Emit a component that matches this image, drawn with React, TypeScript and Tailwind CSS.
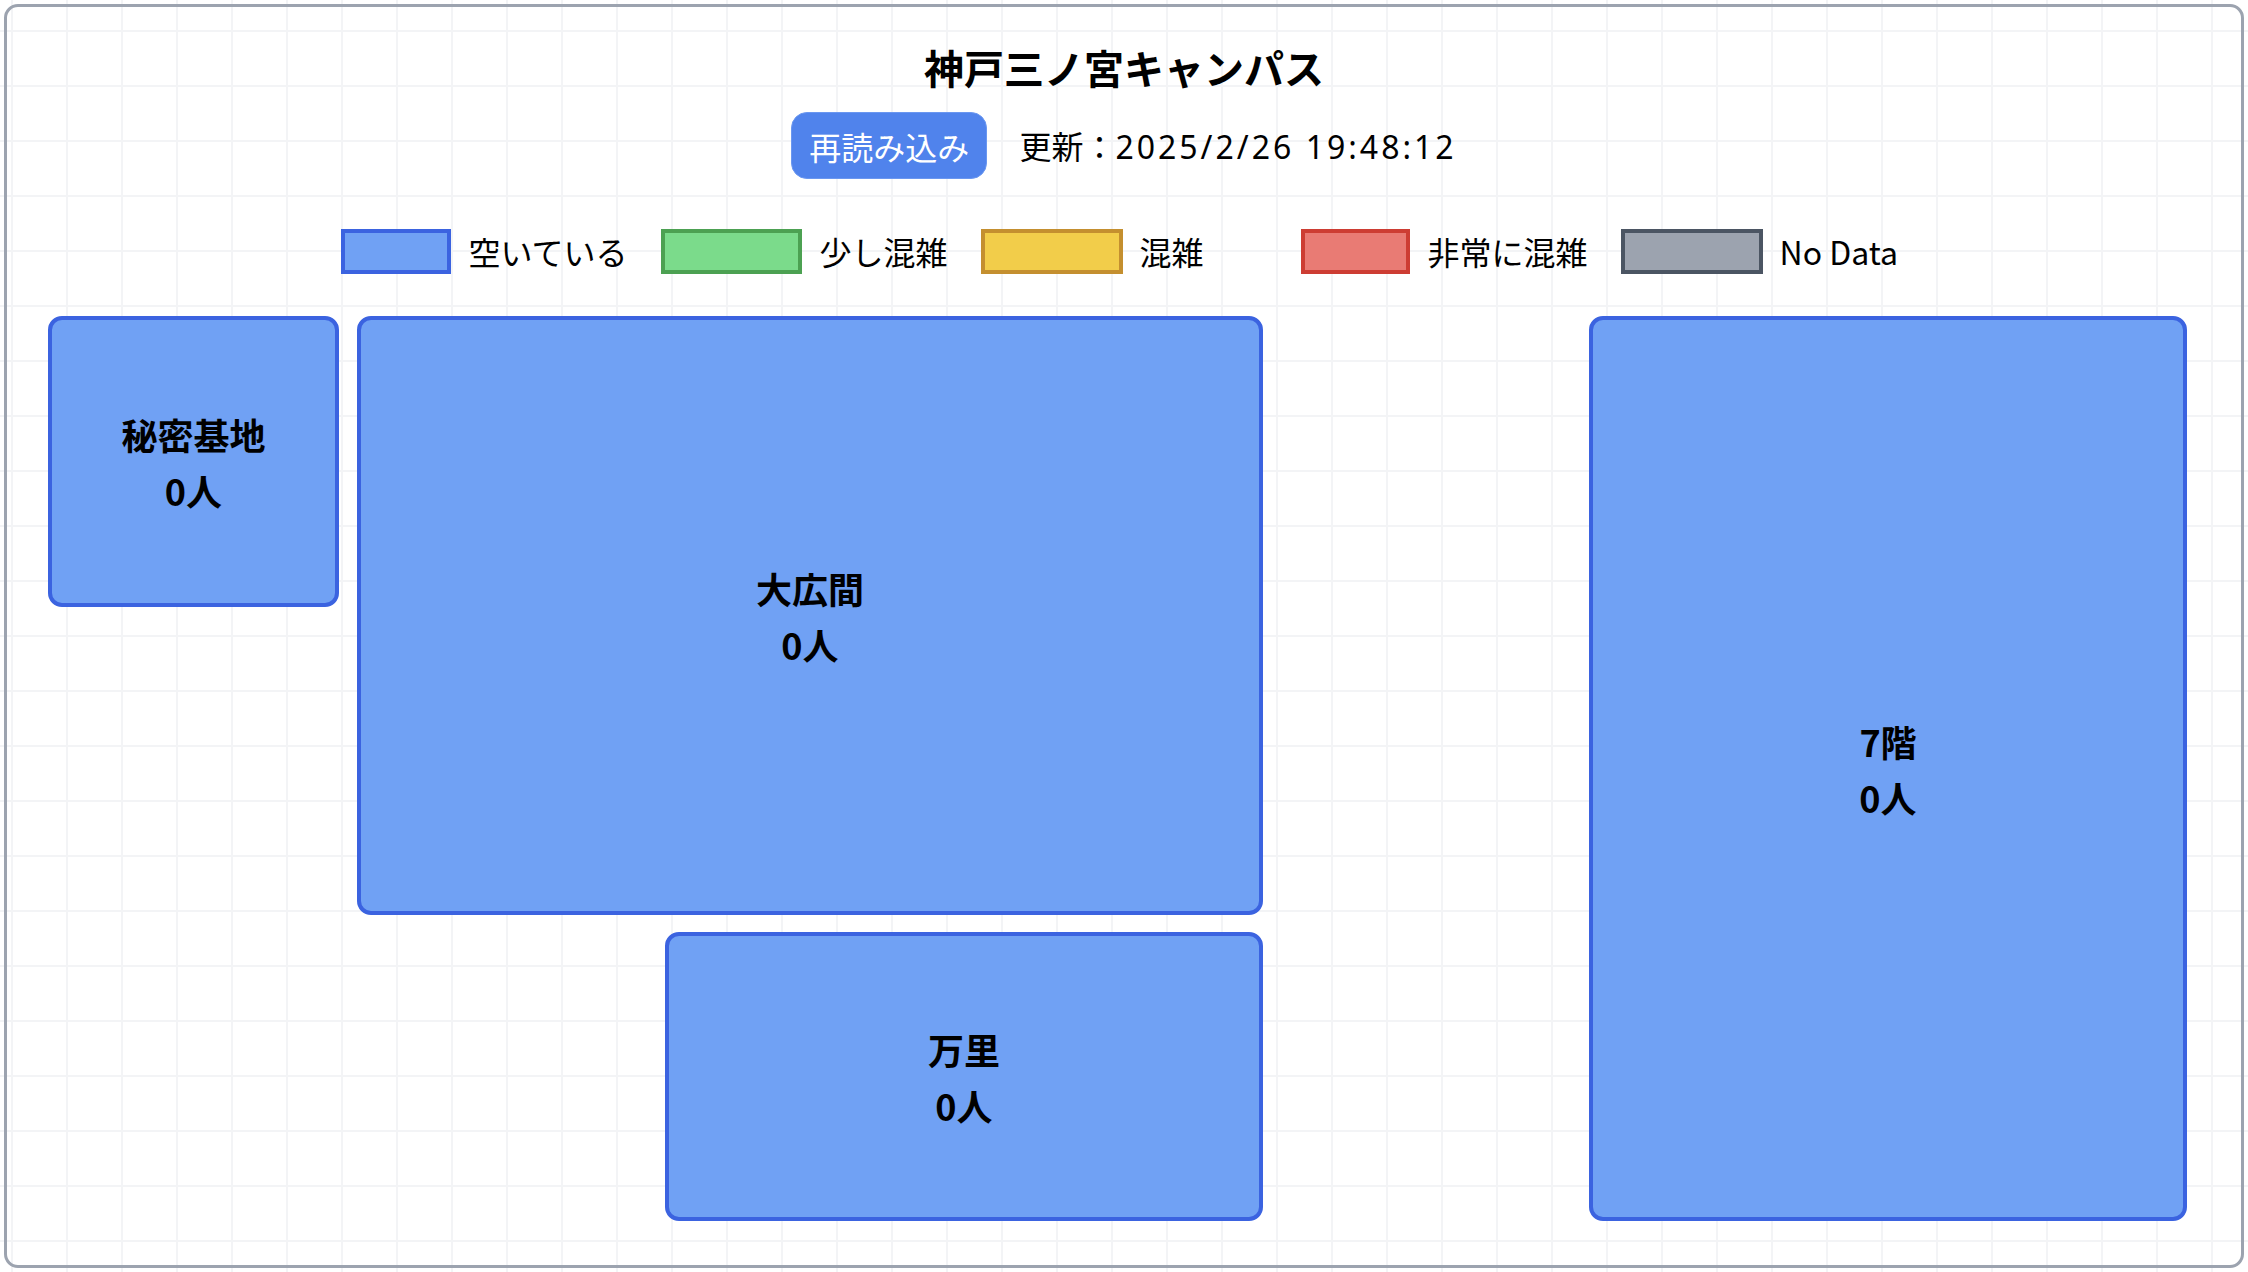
const legend = [
  { label: '空いている', fill: 'bg-[#70a1f4]', border: 'border-[#3b63e0]' },
  { label: '少し混雑', fill: 'bg-[#7bdb8b]', border: 'border-[#4ca152]' },
  { label: '混雑', fill: 'bg-[#f2cd4a]', border: 'border-[#c48f2f]' },
  { label: '非常に混雑', fill: 'bg-[#e97b74]', border: 'border-[#cd3d33]' },
  { label: 'No Data', fill: 'bg-[#9ca3af]', border: 'border-[#4b5563]' },
];

const rooms = [
  { name: '秘密基地', count: 0, place: 'col-start-1 row-start-1' },
  { name: '大広間', count: 0, place: 'col-start-3 col-span-2 row-start-1 row-span-2' },
  { name: '万里', count: 0, place: 'col-start-4 row-start-4' },
  { name: '7階', count: 0, place: 'col-start-6 row-start-1 row-span-4' },
];

function Room({ name, count, place }: { name: string; count: number; place: string }) {
  return (
    <div
      className={`${place} flex flex-col items-center justify-center rounded-[14px] border-4 border-[#3b63e0] bg-[#70a1f4] text-[36px] leading-[56px] font-bold text-black`}
    >
      <span>{name}</span>
      <span>{count}人</span>
    </div>
  );
}

export default function App() {
  return (
    <div className="min-h-screen w-full p-[4px] bg-white bg-[linear-gradient(to_right,#f3f4f6_2px,transparent_2px),linear-gradient(to_bottom,#f3f4f6_2px,transparent_2px)] bg-[size:55px_55px] bg-[position:11px_30px] font-['Noto_Sans_CJK_JP','Noto_Sans',sans-serif] text-black">
      <div className="h-[1264px] rounded-[14px] border-[3px] border-[#9ca3af] flex flex-col items-center pt-[32px]">
        <h1 className="text-[40px] leading-[56px] font-bold">神戸三ノ宮キャンパス</h1>

        <div className="mt-[17px] flex items-center gap-[32px]">
          <button className="h-[67px] w-[196px] rounded-[16px] border border-[#6a97f0] bg-[#5083ec] text-[32px] leading-[48px] text-white">
            再読み込み
          </button>
          <span className="text-[32px] leading-[48px]">
            更新：
            <span className="font-['Noto_Sans','Noto_Sans_CJK_JP',sans-serif] tracking-[3px]">2025/2/26 19:48:12</span>
          </span>
        </div>

        <div className="mt-[50px] grid grid-cols-[repeat(5,287px)] gap-x-[33px]">
          {legend.map((l) => (
            <div key={l.label} className="flex items-center gap-[17px] h-[45px]">
              <div className={`h-[45px] w-[142px] shrink border-4 ${l.fill} ${l.border}`} />
              <span className="whitespace-nowrap text-[32px] leading-[45px]">{l.label}</span>
            </div>
          ))}
        </div>

        <div className="mt-[42px] self-start ml-[41px] grid grid-cols-[291px_18px_308px_598px_326px_598px] grid-rows-[291px_308px_17px_289px]">
          {rooms.map((r) => (
            <Room key={r.name} {...r} />
          ))}
        </div>
      </div>
    </div>
  );
}
